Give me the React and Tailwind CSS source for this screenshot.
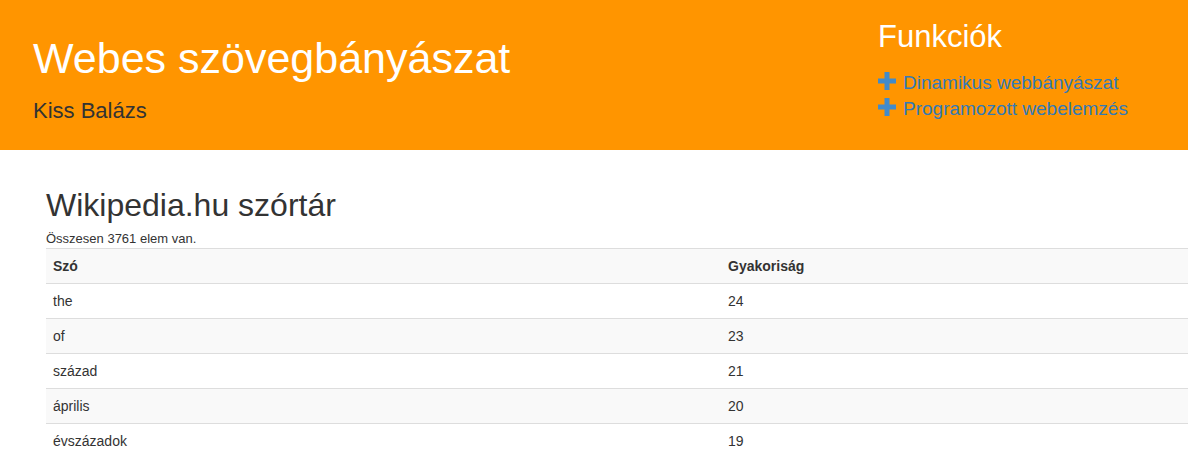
import React from "react";

const rows = [
  ["the", "24"],
  ["of", "23"],
  ["század", "21"],
  ["április", "20"],
  ["évszázadok", "19"],
];

function Plus() {
  return (
    <svg width="18" height="18" viewBox="0 0 18 18" className="shrink-0 mb-[4px]">
      <rect x="6.5" y="0" width="5" height="18" fill="#428bca" />
      <rect x="0" y="6.5" width="18" height="5" fill="#428bca" />
    </svg>
  );
}

export default function App() {
  return (
    <div className="min-h-[458px] bg-white text-[#333] font-['Liberation_Sans',Arial,sans-serif] overflow-hidden">
      <header className="h-[150px] bg-[#ff9500] flex">
        <div className="flex-1 pl-[33px] pt-[33px]">
          <h1 className="text-[43px] leading-[50px] text-white">Webes szövegbányászat</h1>
          <p className="mt-[15px] text-[22px] leading-[26px] text-[#333]">Kiss Balázs</p>
        </div>
        <div className="w-[310px] pt-[18px]">
          <h2 className="text-[31px] leading-[38px] text-white">Funkciók</h2>
          <ul className="mt-[14px]">
            <li className="flex items-center gap-[7px] h-[26px] text-[19px] text-[#337ab7]">
              <Plus />
              <span>Dinamikus webbányászat</span>
            </li>
            <li className="flex items-center gap-[7px] h-[26px] text-[19px] text-[#337ab7]">
              <Plus />
              <span>Programozott webelemzés</span>
            </li>
          </ul>
        </div>
      </header>
      <main className="pl-[46px] pt-[37px]">
        <h2 className="text-[32px] leading-[36px] text-[#333]">Wikipedia.hu szórtár</h2>
        <p className="text-[13px] leading-[17px] mt-[7px] mb-[1px]">Összesen 3761 elem van.</p>
        <div className="border-b border-[#ddd]">
          <div className="flex h-[35px] items-center bg-[#f9f9f9] border-t border-[#ddd] text-[14px] font-bold">
            <div className="w-[674px] pl-[7px]">Szó</div>
            <div className="pl-[8px]">Gyakoriság</div>
          </div>
          {rows.map(([w, f], i) => (
            <div
              key={w}
              className={`flex h-[35px] items-center border-t border-[#ddd] text-[14px] ${i % 2 === 1 ? "bg-[#f9f9f9]" : "bg-white"}`}
            >
              <div className="w-[674px] pl-[7px]">{w}</div>
              <div className="pl-[8px]">{f}</div>
            </div>
          ))}
        </div>
      </main>
    </div>
  );
}
